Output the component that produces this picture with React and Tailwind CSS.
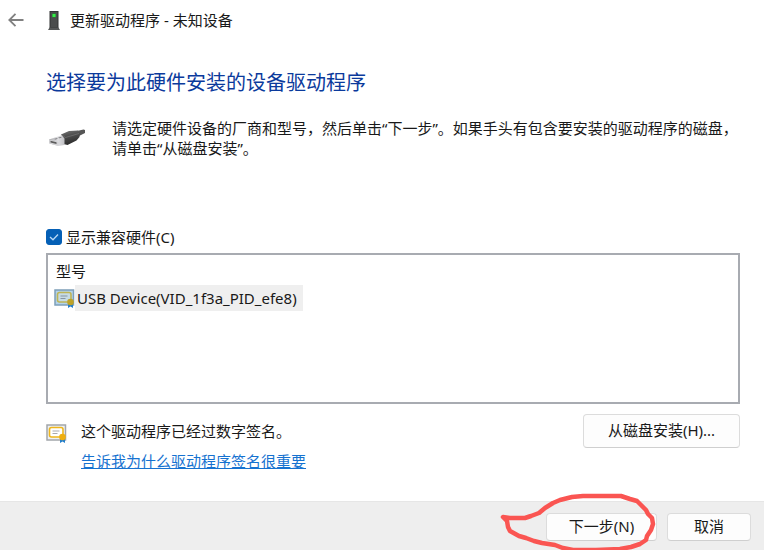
import React from "react";

const DeviceIcon = () => (
  <svg width="12" height="20" viewBox="0 0 12 20" className="shrink-0" aria-hidden="true">
    <rect x="2" y="1.500" width="8" height="16" fill="#4b4d4d" stroke="#333535" />
    <rect x="4" y="3.500" width="4" height="4" fill="#2f7a38" />
    <rect x="4.500" y="4" width="3" height="3" fill="#35ee48" />
    <path d="M1.500 17.500h9L12 20H0z" fill="#555757" />
  </svg>
);

const BackIcon = () => (
  <svg width="16" height="14" viewBox="0 0 16 14" fill="none" stroke="#808080" strokeWidth="1.800" aria-hidden="true">
    <path d="M15.500 7H1.500M7.500 0.800L1.300 7l6.200 6.200" />
  </svg>
);

const UsbIcon = () => (
  <svg width="40" height="24" viewBox="0 0 40 24" className="shrink-0" aria-hidden="true">
    <defs>
      <linearGradient id="plug" x1="0" y1="0" x2="0.300" y2="1">
        <stop offset="0" stopColor="#7a7a7a" />
        <stop offset="0.400" stopColor="#505050" />
        <stop offset="1" stopColor="#2c2c2c" />
      </linearGradient>
      <linearGradient id="metal" x1="0" y1="0" x2="1" y2="0">
        <stop offset="0" stopColor="#a9a9ad" />
        <stop offset="0.500" stopColor="#dedee1" />
        <stop offset="1" stopColor="#b4b4b8" />
      </linearGradient>
    </defs>
    <path d="M31 5l6.500-1.500L39 4v3l-6 3z" fill="#565656" />
    <path d="M3 13.500L15 9.500l6 3v6L12.500 20 3.500 17.500z" fill="url(#metal)" />
    <path d="M3 13.500l9.500 2.500V20l-9-2.500z" fill="#d2d2d5" />
    <path d="M4.500 14.800l6 1.500V18l-6-1.500z" fill="#5c5c5c" />
    <path d="M8 13l2.500-.800 1.500.500-2.500.800zM12 11.800l2.500-.800 1.500.500-2.500.800z" fill="#77777a" />
    <path d="M15 8.500l8-3.500 9-.500 2 2-.500 4.500-3 3.500L21.500 19l-3-1V12.500z" fill="url(#plug)" />
    <path d="M15 8.500l4.500 3L33 7.500" fill="none" stroke="#7c7c7c" strokeWidth="0.600" />
  </svg>
);

const CertificateIcon = ({ selected }) => (
  <svg width="21" height="19" viewBox="0 0 21 19" className="shrink-0" aria-hidden="true">
    <rect x="1" y="1" width="18.500" height="15" fill={selected ? "#b3d3ea" : "#eef0f2"} stroke={selected ? "#7d9fb8" : "#a3a6aa"} strokeWidth="1.500" />
    <rect x="3.500" y="3.500" width="13.500" height="9.500" rx="2" fill={selected ? "#c6dbe4" : "#fff"} stroke={selected ? "#bfb555" : "#efb61c"} strokeWidth="1.600" />
    <path d="M6.500 7h7M6.500 9.500h5" stroke={selected ? "#8794a3" : "#a9a9ad"} />
    <path d="M14 14h5v5l-2.500-1.500L14 19z" fill="#267fcb" />
    <circle cx="16.500" cy="13" r="3.300" fill={selected ? "#bda228" : "#eeae10"} />
  </svg>
);

const CheckIcon = () => (
  <svg
    viewBox="0 0 16 16"
    fill="none"
    stroke="#b8d8f5"
    strokeWidth="1.300"
    className="pointer-events-none col-start-1 row-start-1 hidden size-4 peer-checked:block"
    aria-hidden="true"
  >
    <path d="M4 8l3 2.800L12 5.500" />
  </svg>
);

// hand-drawn loop around the "next" button
const Marker = () => (
  <svg
    width="164"
    height="57"
    viewBox="0 0 164 57"
    fill="none"
    stroke="#fa5552"
    strokeWidth="4.500"
    strokeLinejoin="round"
    strokeLinecap="round"
    className="pointer-events-none absolute -top-5 -left-12"
    aria-hidden="true"
  >
    <path d="M5 24l7 1h15l6-2 8-3 6-5 8-5 7-3 12-3 11-1h38l9 3 7 2 4 4 5 5 2 4 4 4 1 6-2 6-4 6-1 4-6 4-9 3-11 2-24 1H75l-10-2-8-3-13-2-8-2-8-3-7-2-9-5-2-4-1-6z" />
  </svg>
);

const Button = ({ children, className }) => (
  <button
    type="button"
    className={`rounded-sm border border-[#dcdcdc] border-b-[#cfcfcf] bg-[#fdfdfd] pb-0.5 text-center whitespace-nowrap ${className}`}
  >
    {children}
  </button>
);

const App = () => {
  return (
    <div className="flex min-h-screen flex-col bg-white font-['Noto_Sans','Noto_Sans_CJK_SC',sans-serif] text-[15px] leading-5 text-[#191919]">
      <header className="flex h-10 items-center px-2">
        <button type="button" aria-label="返回" className="mr-6">
          <BackIcon />
        </button>
        <DeviceIcon />
        <span className="ml-2.5">更新驱动程序 - 未知设备</span>
      </header>

      <main className="flex grow flex-col pt-[29px] pr-6 pl-[46px]">
        <h1 className="text-xl leading-7 text-[#0b3a9c]">
          选择要为此硬件安装的设备驱动程序
        </h1>

        <div className="mt-[21px] flex items-start">
          <div className="w-[66px] shrink-0 pt-2">
            <UsbIcon />
          </div>
          <p className="min-w-0">
            请选定硬件设备的厂商和型号，然后单击“下一步”。如果手头有包含要安装的驱动程序的磁盘，请单击“从磁盘安装”。
          </p>
        </div>

        <label className="mt-[69px] flex items-center gap-1 self-start">
          <span className="grid">
            <input
              type="checkbox"
              defaultChecked
              className="peer col-start-1 row-start-1 size-4 appearance-none rounded-[3px] border border-gray-500 checked:border-[#0560b6] checked:bg-[#0560b6]"
            />
            <CheckIcon />
          </span>
          显示兼容硬件(C)
        </label>

        <div className="mt-1.5 h-[151px] border-2 border-[#a8abb1] px-1.5 pt-0.5">
          <table className="w-full text-left">
            <thead>
              <tr>
                <th className="h-7 px-0.5 font-normal">型号</th>
              </tr>
            </thead>
            <tbody>
              <tr>
                <td className="p-0">
                  <div className="flex items-center">
                    <CertificateIcon selected />
                    <span className="bg-[#efefef] py-[3px] pr-1.5 pl-0.5">
                      USB Device(VID_1f3a_PID_efe8)
                    </span>
                  </div>
                </td>
              </tr>
            </tbody>
          </table>
        </div>

        <div className="mt-2.5 flex items-start">
          <div className="w-[35px] shrink-0 pt-2.5">
            <CertificateIcon />
          </div>
          <div className="grow pt-[7px]">
            <p>这个驱动程序已经过数字签名。</p>
            <a href="#signing" className="mt-2.5 inline-block text-[#1672d0] underline">
              告诉我为什么驱动程序签名很重要
            </a>
          </div>
          <Button className="h-[34px] w-[157px]">从磁盘安装(H)...</Button>
        </div>
      </main>

      <footer className="flex h-[49px] justify-end gap-2.5 border-t border-[#e6e6e6] bg-[#eeeeee] pt-[11px] pr-[13px]">
        <div className="relative">
          <Button className="h-7 w-[111px]">下一步(N)</Button>
          <Marker />
        </div>
        <Button className="h-7 w-[84px]">取消</Button>
      </footer>
    </div>
  );
};

export default App;
